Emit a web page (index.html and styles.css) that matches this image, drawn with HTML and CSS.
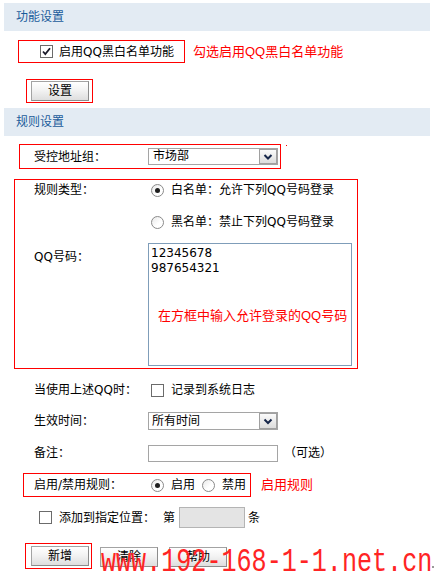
FILE: index.html
```html
<!DOCTYPE html>
<html lang="zh-CN">
<head>
    <meta charset="UTF-8">
    <meta name="viewport" content="width=device-width, initial-scale=1.0">
    <title>QQ黑白名单</title>
    <link rel="stylesheet" href="styles.css">
</head>
<body>
    <div class="page">
        <div class="bar">功能设置</div>
        <div class="line line-func">
            <div class="mark mark-func">
                <span class="chk"><svg width="13" height="13" viewBox="0 0 13 13"><path d="M3 6.5 L5.3 9 L10 3.2" fill="none" stroke="#1a1a2a" stroke-width="1.8"/></svg></span>
                <span class="chk-text">启用QQ黑白名单功能</span>
            </div>
            <span class="note">勾选启用QQ黑白名单功能</span>
        </div>
        <div class="mark mark-set"><button class="btn">设置</button></div>

        <div class="bar bar-rule">规则设置</div>
        <div class="line line-group">
            <div class="mark mark-group">
                <span class="label">受控地址组：</span>
                <div class="select">
                    <span class="select-text">市场部</span>
                    <span class="select-arrow"><svg width="16" height="13" viewBox="0 0 16 13"><path d="M4.5 5 L8 8.5 L11.5 5" fill="none" stroke="#16264a" stroke-width="2"/></svg></span>
                </div>
            </div>
            <span class="dot"></span>
        </div>

        <div class="mark mark-rule">
            <div class="row">
                <span class="label">规则类型：</span>
                <span class="radio on"></span>
                <span class="opt">白名单：允许下列QQ号码登录</span>
            </div>
            <div class="row row-second">
                <span class="label"></span>
                <span class="radio"></span>
                <span class="opt">黑名单：禁止下列QQ号码登录</span>
            </div>
            <div class="row row-qq">
                <span class="label">QQ号码：</span>
                <div class="textarea">
                    <div class="qq-line">12345678</div>
                    <div class="qq-line">987654321</div>
                    <div class="note note-area">在方框中输入允许登录的QQ号码</div>
                </div>
            </div>
        </div>

        <div class="row row-plain row-log">
            <span class="label">当使用上述QQ时：</span>
            <span class="chk chk-off"></span>
            <span class="opt">记录到系统日志</span>
        </div>
        <div class="row row-plain row-time">
            <span class="label">生效时间：</span>
            <div class="select select-time">
                <span class="select-text">所有时间</span>
                <span class="select-arrow"><svg width="16" height="14" viewBox="0 0 16 14"><path d="M4.5 5.5 L8 9 L11.5 5.5" fill="none" stroke="#16264a" stroke-width="2"/></svg></span>
            </div>
        </div>
        <div class="row row-plain row-memo">
            <span class="label">备注：</span>
            <div class="input"></div>
            <span class="hint">（可选）</span>
        </div>

        <div class="line line-state">
            <div class="mark mark-state">
                <span class="label">启用/禁用规则：</span>
                <span class="radio on"></span>
                <span class="opt">启用</span>
                <span class="radio radio-second"></span>
                <span class="opt">禁用</span>
            </div>
            <span class="note note-state">启用规则</span>
        </div>

        <div class="row row-add">
            <span class="chk chk-off"></span>
            <span class="add-text">添加到指定位置：</span>
            <span class="pos-text">第</span>
            <div class="input input-pos"></div>
            <span class="pos-after">条</span>
        </div>

        <div class="line line-btns">
            <div class="mark mark-new"><button class="btn">新增</button></div>
            <button class="btn btn-clear">清除</button>
            <button class="btn btn-help">帮助</button>
        </div>

        <div class="watermark">www.192-168-1-1.net.cn</div>
        <span class="corner-dot"></span>
    </div>
</body>
</html>
```

FILE: styles.css
```css
* {
    box-sizing: border-box;
}
body {
    margin: 0;
    background: #fff;
    color: #000;
    font-family: "DejaVu Sans", "Noto Sans CJK SC", sans-serif;
    font-size: 12px;
    line-height: 14px;
}
.page {
    position: relative;
    width: 435px;
    height: 578px;
    padding: 3px 5px 0 4px;
    overflow: hidden;
}
.bar {
    height: 28px;
    line-height: 28px;
    padding-left: 12px;
    background: #e3ebf3;
    color: #1b5b9b;
}
.bar-rule {
    margin-top: 5px;
}
.mark {
    border: 1px solid #f00;
}
.line {
    display: flex;
    align-items: center;
}
.note {
    color: #f00;
    font-size: 13px;
    font-family: "Liberation Sans", "Noto Sans CJK SC", sans-serif;
}

/* function settings */
.line-func {
    margin-top: 9px;
}
.mark-func {
    display: flex;
    align-items: center;
    width: 167px;
    height: 23px;
    margin-left: 14px;
    padding-left: 21px;
}
.chk-text {
    margin-left: 6px;
}
.line-func .note {
    margin-left: 8px;
}
.mark-set {
    width: 67px;
    height: 24px;
    margin: 16px 0 0 22px;
    padding: 1px 0 0 4px;
}
.btn {
    display: block;
    width: 58px;
    height: 20px;
    padding: 0;
    border: 1px solid #a3a3a3;
    border-right-color: #8c8c8c;
    border-bottom-color: #8c8c8c;
    background: linear-gradient(#ffffff, #f3f3f3 45%, #dedede);
    font: inherit;
    line-height: 18px;
    color: #000;
}

/* controls */
.chk {
    display: inline-block;
    width: 13px;
    height: 13px;
    border: 1px solid #6b6b6b;
    background: #fff;
    flex: none;
}
.chk svg {
    display: block;
    margin: -1px;
}
.radio {
    position: relative;
    display: inline-block;
    width: 13px;
    height: 13px;
    margin-left: 3px;
    border: 1px solid #8a8a8a;
    border-radius: 50%;
    background: linear-gradient(135deg, #e8e8e8, #fff 60%);
    flex: none;
}
.radio.on::after {
    content: "";
    position: absolute;
    left: 3px;
    top: 3px;
    width: 5px;
    height: 5px;
    border-radius: 50%;
    background: #1e1e1e;
}
.opt {
    margin-left: 7px;
}
.label {
    width: 114px;
    flex: none;
}
.select {
    display: flex;
    justify-content: space-between;
    width: 130px;
    height: 17px;
    border: 1px solid #a5a5a5;
    background: #fff;
}
.select-text {
    padding-left: 4px;
    line-height: 15px;
}
.select-arrow {
    width: 18px;
    height: 15px;
    border: 1px solid #a0a0a0;
    background: linear-gradient(#fbfbfb, #dcdcdc);
}
.select-arrow svg {
    display: block;
}
.select-time {
    height: 18px;
}
.select-time .select-text {
    padding-left: 3px;
    line-height: 16px;
}
.select-time .select-arrow {
    height: 16px;
}
.input {
    width: 130px;
    height: 17px;
    border: 1px solid #a5a5a5;
    background: #fff;
}
.hint {
    margin-left: 6px;
}

/* rule settings */
.line-group {
    align-items: flex-start;
    margin-top: 8px;
}
.mark-group {
    display: flex;
    align-items: center;
    width: 262px;
    height: 25px;
    margin-left: 15px;
    padding-left: 14px;
}
.dot {
    width: 1px;
    height: 1px;
    margin: 1px 0 0 5px;
    background: #f00;
}
.mark-rule {
    width: 344px;
    height: 190px;
    margin: 10px 0 0 10px;
    padding-left: 19px;
}
.row {
    display: flex;
    align-items: center;
    height: 20px;
}
.row-second {
    margin-top: 12px;
}
.row-qq {
    align-items: flex-start;
    height: auto;
    margin-top: 11px;
}
.row-qq .label {
    padding-top: 7px;
}
.textarea {
    width: 204px;
    height: 123px;
    padding: 2px 0 0 2px;
    border: 1px solid #7f9db9;
    line-height: 15px;
}
.note-area {
    margin: 31px 0 0 7px;
    line-height: 18px;
}
.row-plain {
    margin-left: 30px;
}
.row-log {
    margin-top: 11px;
}
.row-log .chk {
    margin-left: 3px;
}
.row-time {
    margin-top: 11px;
}
.row-memo {
    margin-top: 12px;
}
.line-state {
    margin-top: 10px;
}
.mark-state {
    display: flex;
    align-items: center;
    width: 228px;
    height: 24px;
    margin-left: 19px;
    padding-left: 10px;
}
.radio-second {
    margin-left: 7px;
}
.note-state {
    margin-left: 10px;
}
.row-add {
    height: 21px;
    margin: 10px 0 0 35px;
}
.add-text {
    margin-left: 7px;
}
.pos-text {
    margin-left: 8px;
}
.input-pos {
    width: 66px;
    height: 21px;
    margin-left: 4px;
    border-color: #b4b4b4;
    background: #e4e4e4;
}
.pos-after {
    margin-left: 3px;
}
.line-btns {
    align-items: flex-start;
    margin-top: 15px;
}
.mark-new {
    width: 67px;
    height: 26px;
    margin-left: 21px;
    padding: 2px 0 0 5px;
}
.btn-clear {
    margin: 4px 0 0 8px;
}
.btn-help {
    margin: 4px 0 0 11px;
}

/* watermark */
.watermark {
    position: absolute;
    left: 101px;
    top: 545px;
    font-family: "Liberation Mono", monospace;
    font-size: 34px;
    line-height: 34px;
    color: #ff2424;
    white-space: nowrap;
    transform: scaleX(0.738);
    transform-origin: left top;
}
.corner-dot {
    position: absolute;
    left: 432px;
    top: 566px;
    width: 2px;
    height: 2px;
    background: #999;
}
```
